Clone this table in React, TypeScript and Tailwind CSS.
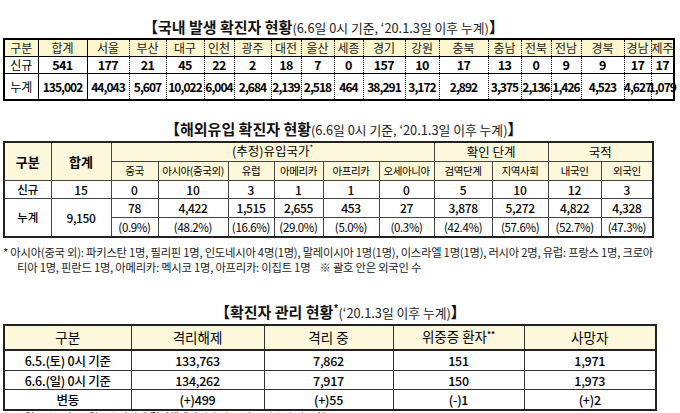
import React from "react";

const KR = "font-['Noto_Sans_CJK_KR',sans-serif]";

const t1Head = ["구분", "합계", "서울", "부산", "대구", "인천", "광주", "대전", "울산", "세종", "경기", "강원", "충북", "충남", "전북", "전남", "경북", "경남", "제주"];
const t1New = ["541", "177", "21", "45", "22", "2", "18", "7", "0", "157", "10", "17", "13", "0", "9", "9", "17", "17"];
const t1Cum = ["135,002", "44,043", "5,607", "10,022", "6,004", "2,684", "2,139", "2,518", "464", "38,291", "3,172", "2,892", "3,375", "2,136", "1,426", "4,523", "4,627", "1,079"];
const t1W = [34, 49, 42, 37, 38, 30, 37, 30, 33, 29, 42, 34, 49, 33, 30, 30, 43, 27, 23];

const t2W = [47, 60, 47, 70, 46, 49, 56, 55, 58, 56, 53, 52];
const t2Sub = ["중국", "아시아(중국외)", "유럽", "아메리카", "아프리카", "오세아니아", "검역단계", "지역사회", "내국인", "외국인"];
const t2New = ["0", "10", "3", "1", "1", "0", "5", "10", "12", "3"];
const t2Cum = ["78", "4,422", "1,515", "2,655", "453", "27", "3,878", "5,272", "4,822", "4,328"];
const t2Pct = ["(0.9%)", "(48.2%)", "(16.6%)", "(29.0%)", "(5.0%)", "(0.3%)", "(42.4%)", "(57.6%)", "(52.7%)", "(47.3%)"];

const t3W = [127, 133, 129, 131, 132];
const t3Rows = [
  ["6.5.(토) 0시 기준", "133,763", "7,862", "151", "1,971"],
  ["6.6.(일) 0시 기준", "134,262", "7,917", "150", "1,973"],
  ["변동", "(+)499", "(+)55", "(-)1", "(+)2"],
];

function Title({ main, sub, star }: { main: string; sub: string; star?: boolean }) {
  return (
    <div className={`${KR} flex items-baseline whitespace-nowrap text-[#111]`}>
      <span className="text-[15px] font-bold leading-[18px]">{main}</span>
      {star && <span className="relative -top-[6px] text-[10px] font-bold leading-none">*</span>}
      <span className="text-[12.8px] leading-[18px] text-[#222]">{sub}</span>
      <span className="text-[15px] font-bold leading-[18px]">】</span>
    </div>
  );
}

function Num({ v }: { v: string }) {
  return (
    <div className="flex justify-center">
      <span className="shrink-0 whitespace-nowrap">{v}</span>
    </div>
  );
}

export default function App() {
  return (
    <div className={`${KR} w-[680px] h-[413px] overflow-hidden bg-white text-black`}>
      <div className="flex flex-col pl-[3px]">
        {/* Title 1 */}
        <div className="mt-[18px] ml-[140px]">
          <Title main="【국내 발생 확진자 현황" sub="(6.6일 0시 기준, ‘20.1.3일 이후 누계)" />
        </div>
        <table className="mt-[1px] w-[670px] table-fixed border-collapse border-2 border-black">
          <colgroup>
            {t1W.map((w, i) => (
              <col key={i} style={{ width: w }} />
            ))}
          </colgroup>
          <tbody>
            <tr className="h-[17px] border-b border-black bg-[#fdf6cf]">
              {t1Head.map((h, i) => (
                <td
                  key={i}
                  className={`p-0 text-center text-[12px] leading-[15px] text-[#222] border-black whitespace-nowrap ${i < 2 ? "border border-solid" : "border border-dotted"}`}
                >
                  {h}
                </td>
              ))}
            </tr>
            <tr className="h-[17px] border-b border-black">
              <td className="p-0 text-center text-[12px] leading-[15px] border border-solid border-black">신규</td>
              {t1New.map((v, i) => (
                <td
                  key={i}
                  className={`p-0 text-center text-[12.5px] font-bold leading-[15px] tracking-[-0.05em] border-black ${i < 1 ? "border border-solid" : "border border-dotted"}`}
                >
                  <Num v={v} />
                </td>
              ))}
            </tr>
            <tr className="h-[27px]">
              <td className="p-0 text-center text-[12px] leading-[15px] border border-solid border-black">누계</td>
              {t1Cum.map((v, i) => (
                <td
                  key={i}
                  className={`p-0 text-center text-[12px] font-bold leading-[15px] tracking-[-0.08em] border-black ${i < 1 ? "border border-solid" : "border border-dotted"}`}
                >
                  <Num v={v} />
                </td>
              ))}
            </tr>
          </tbody>
        </table>

        {/* Title 2 */}
        <div className="mt-[19px] ml-[162px]">
          <Title main="【해외유입 확진자 현황" sub="(6.6일 0시 기준, ‘20.1.3일 이후 누계)" />
        </div>
        <table className="mt-[2px] w-[649px] table-fixed border-collapse border-2 border-[#222]">
          <colgroup>
            {t2W.map((w, i) => (
              <col key={i} style={{ width: w }} />
            ))}
          </colgroup>
          <tbody>
            <tr className="h-[19px] bg-[#fdf8dc]">
              <td rowSpan={2} className="p-0 text-center text-[13px] font-bold border border-[#444]">구분</td>
              <td rowSpan={2} className="p-0 text-center text-[13px] font-bold border border-[#444]">합계</td>
              <td colSpan={6} className="p-0 text-center text-[12.5px] leading-[16px] border border-[#444]">
                (추정)유입국가<span className="relative -top-[5px] text-[8px]">*</span>
              </td>
              <td colSpan={2} className="p-0 text-center text-[12.5px] leading-[16px] border border-[#444]">확인 단계</td>
              <td colSpan={2} className="p-0 text-center text-[12.5px] leading-[16px] border border-[#444]">국적</td>
            </tr>
            <tr className="h-[19px] bg-[#fdf8dc]">
              {t2Sub.map((s, i) => (
                <td key={i} className="p-0 text-center text-[10.5px] leading-[14px] tracking-[-0.04em] border border-[#444] whitespace-nowrap">
                  {s}
                </td>
              ))}
            </tr>
            <tr className="h-[18px]">
              <td className="p-0 text-center text-[11.5px] font-medium border border-[#444]">신규</td>
              <td className="p-0 text-center text-[12px] font-medium leading-[14px] border border-[#444]">15</td>
              {t2New.map((v, i) => (
                <td key={i} className="p-0 text-center text-[12px] font-medium leading-[14px] border border-[#444]">{v}</td>
              ))}
            </tr>
            <tr className="h-[19px]">
              <td rowSpan={2} className="p-0 text-center text-[11.5px] font-medium border border-[#444]">누계</td>
              <td rowSpan={2} className="p-0 text-center text-[12px] font-medium tracking-[-0.03em] border border-[#444]">9,150</td>
              {t2Cum.map((v, i) => (
                <td key={i} className="p-0 text-center text-[12px] font-medium leading-[14px] tracking-[-0.03em] border border-[#444]">{v}</td>
              ))}
            </tr>
            <tr className="h-[19px]">
              {t2Pct.map((v, i) => (
                <td key={i} className="p-0 text-center text-[11.5px] leading-[14px] tracking-[-0.03em] border border-[#444]">{v}</td>
              ))}
            </tr>
          </tbody>
        </table>

        {/* Footnote */}
        <div className="mt-[7px] text-[11.3px] leading-[15px] tracking-[-0.02em] text-[#222] whitespace-nowrap">
          <div>* 아시아(중국 외): 파키스탄 1명, 필리핀 1명, 인도네시아 4명(1명), 말레이시아 1명(1명), 이스라엘 1명(1명), 러시아 2명, 유럽: 프랑스 1명, 크로아</div>
          <div className="pl-[14px]">티아 1명, 핀란드 1명, 아메리카: 멕시코 1명, 아프리카: 이집트 1명&nbsp;&nbsp;&nbsp;&nbsp;※ 괄호 안은 외국인 수</div>
        </div>

        {/* Title 3 */}
        <div className="mt-[28px] ml-[212px]">
          <Title main="【확진자 관리 현황" sub="(‘20.1.3일 이후 누계)" star />
        </div>
        <table className="mt-[2px] w-[652px] table-fixed border-collapse border-2 border-[#222]">
          <colgroup>
            {t3W.map((w, i) => (
              <col key={i} style={{ width: w }} />
            ))}
          </colgroup>
          <tbody>
            <tr className="h-[25px] bg-[#fdf8dc] border-b-2 border-[#222]">
              {["구분", "격리해제", "격리 중"].map((h, i) => (
                <td key={i} className="p-0 text-center text-[13.5px] leading-[16px] border border-[#333]">{h}</td>
              ))}
              <td className="p-0 text-center text-[13.5px] leading-[16px] border border-[#333]">
                위중증 환자<span className="relative -top-[5px] text-[8px] font-bold">**</span>
              </td>
              <td className="p-0 text-center text-[13.5px] leading-[16px] border border-[#333]">사망자</td>
            </tr>
            {t3Rows.map((r, ri) => (
              <tr key={ri} className={ri === 0 ? "h-[21px]" : ri === 1 ? "h-[19px]" : "h-[20px]"}>
                {r.map((v, i) => (
                  <td key={i} className="p-0 text-center text-[12.5px] font-medium leading-[15px] tracking-[-0.02em] border border-[#333]">{v}</td>
                ))}
              </tr>
            ))}
          </tbody>
        </table>
        <div className="mt-0 text-[10.5px] leading-[12px] text-[#333] whitespace-nowrap">
          * 6.5일 0시부터 6.6일 0시 사이에 격리해제되어 추가로 신고 접수된 건 포함
        </div>
      </div>
    </div>
  );
}
